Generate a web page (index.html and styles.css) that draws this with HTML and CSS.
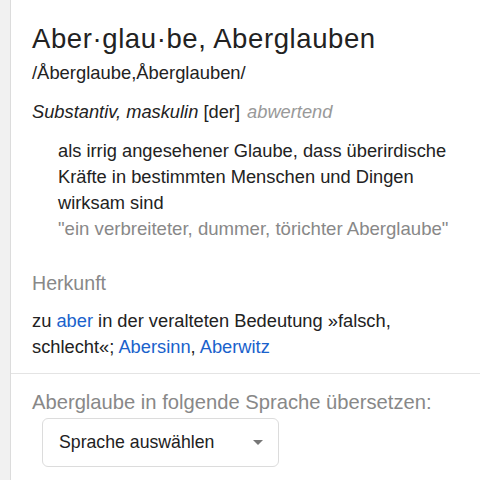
FILE: index.html
```html
<!DOCTYPE html>
<html lang="de">
<head>
    <meta charset="UTF-8">
    <meta name="viewport" content="width=device-width, initial-scale=1.0">
    <title>Aberglaube</title>
    <link rel="stylesheet" href="styles.css">
</head>
<body>
    <div class="card">
        <div class="entry">
            <h1 class="headword">Aber·glau·be, Aberglauben</h1>
            <div class="phonetic">/Åberglaube,Åberglauben/</div>
            <div class="grammar"><i>Substantiv, maskulin</i> [der] <i class="label">abwertend</i></div>
            <div class="sense">
                <div class="definition">als irrig angesehener Glaube, dass überirdische Kräfte in bestimmten Menschen und Dingen wirksam sind</div>
                <div class="example">"ein verbreiteter, dummer, törichter Aberglaube"</div>
            </div>
            <h2 class="section-title">Herkunft</h2>
            <div class="origin">zu <a href="#">aber</a> in der veralteten Bedeutung »falsch, schlecht«; <a href="#">Abersinn</a>, <a href="#">Aberwitz</a></div>
        </div>
        <div class="translate">
            <div class="translate-title">Aberglaube in folgende Sprache übersetzen:</div>
            <div class="select">
                <span>Sprache auswählen</span>
                <span class="arrow"></span>
            </div>
        </div>
    </div>
</body>
</html>
```

FILE: styles.css
```css
/* General Reset */
* {
    margin: 0;
    padding: 0;
    box-sizing: border-box;
}
body {
    font-family: 'Liberation Sans', Arial, sans-serif;
    background-color: #f1f1f1;
    color: #222;
    padding-left: 10px;
    height: 480px;
    overflow: hidden;
}
.card {
    background-color: #fff;
    border-left: 1px solid #dcdcdc;
    min-height: 480px;
}
.entry {
    padding: 22px 16px 13px 21px;
    border-bottom: 1px solid #e4e4e4;
}
.headword {
    font-size: 27.5px;
    font-weight: normal;
    letter-spacing: 0.6px;
    color: #222;
    line-height: 34px;
}
.phonetic {
    font-size: 18.4px;
    line-height: 24px;
    margin-top: 5px;
}
.grammar {
    font-size: 18.3px;
    line-height: 24px;
    margin-top: 15px;
}
.grammar .label {
    color: #999;
    margin-left: 2px;
}
.sense {
    padding-left: 26px;
    margin-top: 14px;
    font-size: 18.3px;
    line-height: 26px;
}
.example {
    color: #888;
    font-size: 18.6px;
}
.section-title {
    font-size: 19.6px;
    font-weight: normal;
    color: #888;
    line-height: 26px;
    margin-top: 28px;
}
.origin {
    font-size: 18.3px;
    line-height: 26px;
    margin-top: 12px;
}
.origin a {
    color: #1a62cc;
    text-decoration: none;
}
.translate {
    padding: 15px 0 0 21px;
}
.translate-title {
    font-size: 20.2px;
    color: #888;
    line-height: 26px;
}
.select {
    display: flex;
    align-items: center;
    justify-content: space-between;
    width: 237px;
    height: 49px;
    margin: 3px 0 0 10px;
    padding: 0 15px 0 16px;
    border: 1px solid #dcdcdc;
    border-radius: 6px;
    font-size: 17.7px;
    color: #222;
}
.arrow {
    width: 0;
    height: 0;
    border-left: 5px solid transparent;
    border-right: 5px solid transparent;
    border-top: 5px solid #777;
}
```
